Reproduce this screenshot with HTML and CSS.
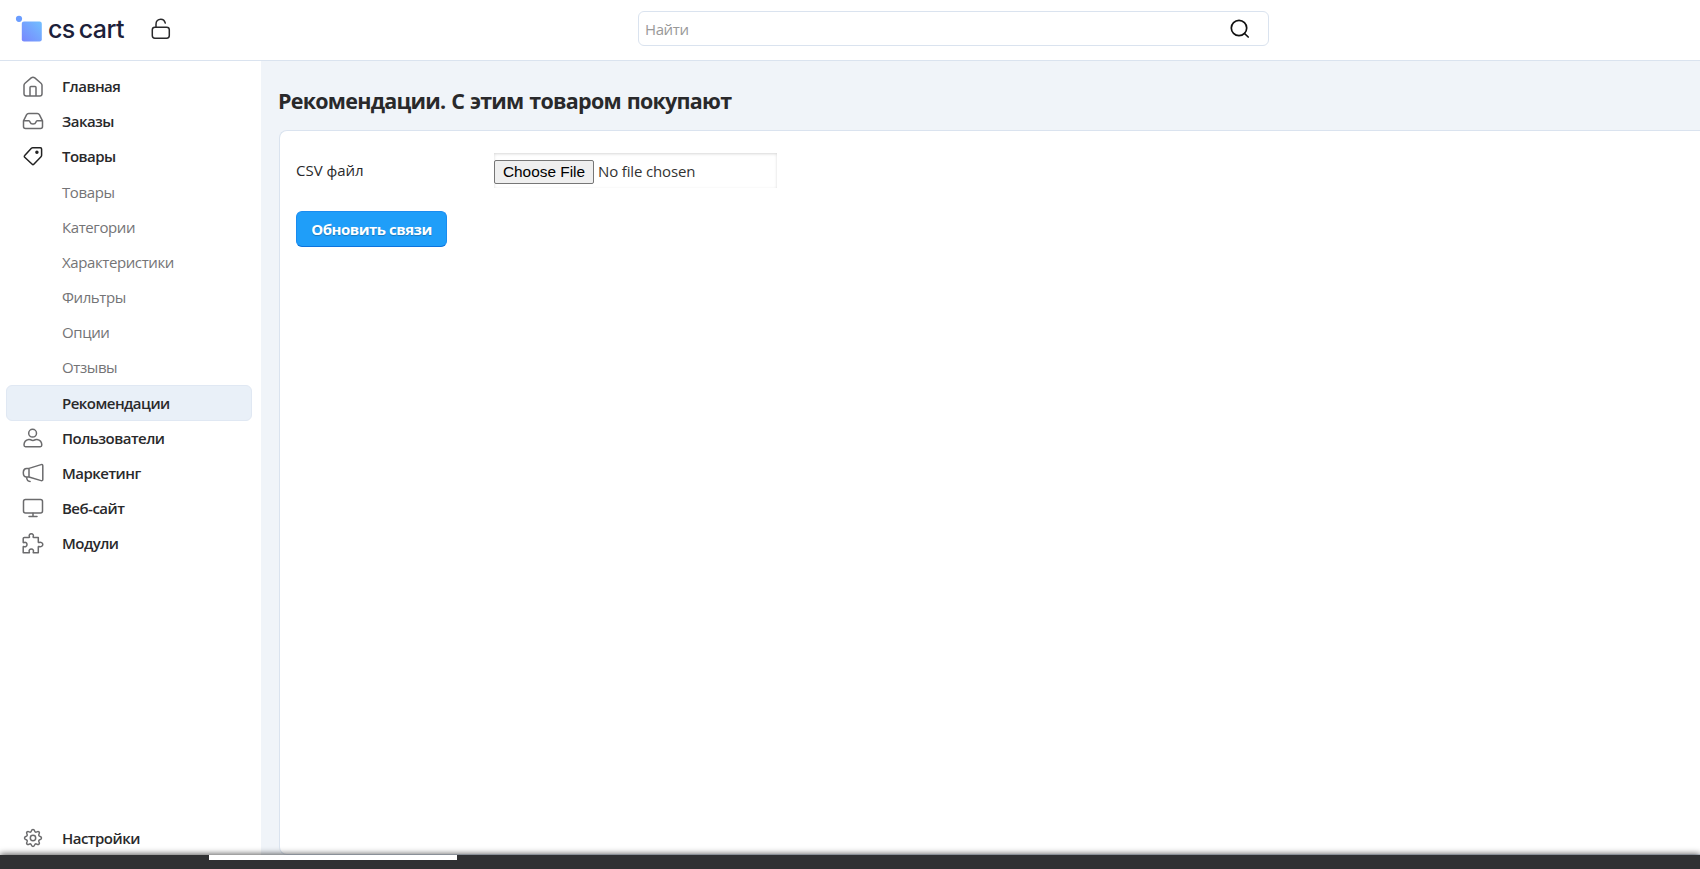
FILE: index.html
```html
<!DOCTYPE html>
<html lang="ru">
<head>
<meta charset="utf-8">
<title>Рекомендации. С этим товаром покупают</title>
<link rel="stylesheet" href="styles.css">
</head>
<body>
<header class="header">
  <div class="brand">
    <svg class="logo-mark" width="28" height="30" viewBox="0 0 28 30">
      <defs><linearGradient id="lg" x1="0" y1="1" x2="1" y2="0"><stop offset="0" stop-color="#7886fd"/><stop offset="1" stop-color="#72c0ff"/></linearGradient></defs>
      <circle cx="4" cy="3.8" r="3.1" fill="#6b9dff"/>
      <rect x="6.8" y="6.5" width="20" height="20" rx="2.2" fill="url(#lg)"/>
    </svg>
    <span class="logo-text">cs cart</span>
    <svg class="lock" width="20" height="22" viewBox="0 0 20 22" fill="none" stroke="#29292b" stroke-width="1.5" stroke-linecap="round"><rect x="1.300" y="9.200" width="17" height="11" rx="2.600"/><path d="M5 9V6.200C5 3.200 7 1.200 9.800 1.200c2.200 0 3.800 1.300 4.500 3.900"/></svg>
  </div>
  <div class="search">
    <span class="search-hint">Найти</span>
    <svg width="20" height="20" viewBox="0 0 20 20" fill="none" stroke="#111" stroke-width="1.700" stroke-linecap="round"><circle cx="9" cy="9" r="7.700"/><path d="M14.500 14.500l3.700 3.500"/></svg>
  </div>
</header>
<div class="layout">
  <nav class="sidebar">
    <a class="item"><svg class="icon" viewBox="0 0 22 22"><path d="M2 9.300C2 8.300 2.300 7.800 3 7.200L9.200 1.900c1.100-.9 2.500-.9 3.600 0L19 7.200c.7.600 1 1.100 1 2.100v8.400c0 1.500-.9 2.300-2.300 2.300H4.300C2.900 20 2 19.200 2 17.700zM8 20v-8.500c0-.7.300-1 .9-1h4.200c.6 0 .9.300.9 1V20"/></svg><span>Главная</span></a>
    <a class="item"><svg class="icon" viewBox="0 0.700 22 22"><path d="M1.500 10.500 4.500 4.600C5 3.600 5.600 3.200 6.700 3.200h8.600c1.100 0 1.700.4 2.200 1.400l3 5.900v5.800c0 1.300-.8 2-2 2h-15c-1.200 0-2-.7-2-2zH6.800c.9 0 1 .5 1.300 1.400.4 1.300 1 1.900 2.900 1.900s2.500-.6 2.900-1.900c.3-.9.400-1.400 1.300-1.400h5.300"/></svg><span>Заказы</span></a>
    <a class="item"><svg class="icon icon-dark" viewBox="0 0.700 22 22"><path d="M10.700 2.400h7.700c.8 0 1.200.400 1.200 1.200v6.400c0 .6-.2 1-.6 1.400l-7.200 7.500c-.5.500-1.100.5-1.600 0L2.700 11.900c-.5-.5-.5-1.100 0-1.600l6.700-7.300c.4-.4.700-.6 1.300-.6z"/><circle cx="14.900" cy="7" r="1" fill="#222"/></svg><span>Товары</span></a>
    <div class="submenu">
      <a class="item sub">Товары</a>
      <a class="item sub">Категории</a>
      <a class="item sub">Характеристики</a>
      <a class="item sub">Фильтры</a>
      <a class="item sub">Опции</a>
      <a class="item sub">Отзывы</a>
      <a class="item sub current">Рекомендации</a>
    </div>
    <a class="item"><svg class="icon" viewBox="0 0 22 22"><circle cx="10.600" cy="5.200" r="3.900"/><path d="M6.800 11.400C3.500 11.900 2 14.500 2 17.100c0 1.100.5 1.700 1.500 1.700h14.800c1 0 1.500-.6 1.500-1.700 0-2.600-1.500-5.200-4.800-5.700-1.300-.2-2.200 1-4.100 1s-2.800-1.200-4.100-1z"/></svg><span>Пользователи</span></a>
    <a class="item"><svg class="icon" viewBox="0 0 22 22"><path d="M7 5.400 19.100 1.600c1-.3 1.700.2 1.700 1.200v13.600c0 1-.7 1.500-1.700 1.200L7 14zM7 5.400H4.700C2.500 5.400 1.300 7.500 1.300 9.700S2.500 14 4.700 14H7M4.600 14.200c.2 2.600 1.300 4.200 3.500 4.200"/></svg><span>Маркетинг</span></a>
    <a class="item"><svg class="icon" viewBox="0 0 22 22"><rect x="1.500" y="1.500" width="19" height="13.500" rx="2"/><path d="M11 15.200v3M7 18.500h8"/></svg><span>Веб-сайт</span></a>
    <a class="item"><svg class="icon" viewBox="0 0 22 22"><path d="M2.400 4.400H7c.5 0 .6-.3.400-.8C6.700 2 7.700.8 9.300.8s2.600 1.200 1.900 2.800c-.2.500-.1.800.4.800h4.700v4.700c0 .5.300.6.800.4 1.600-.7 3.700.3 3.700 2s-2.100 2.700-3.700 2c-.5-.2-.8-.1-.8.400v5.900h-4.600c-.5 0-.6-.3-.4-.8.700-1.600-.4-3-2-3s-2.700 1.400-2 3c.2.500.1.800-.4.800H1.200V14c0-.5.300-.6.800-.4 1.600.7 3-.4 3-2s-1.400-2.700-3-2c-.5.200-.8.100-.8-.4V5.600c0-.8.400-1.200 1.200-1.200z"/></svg><span>Модули</span></a>
    <a class="item settings"><svg class="icon" viewBox="0 0.500 22 22"><circle cx="11" cy="10.500" r="2.700"/><path d="M11 2c1.200 0 1.400.5 1.700 1.600.3 1 1.100 1.300 2 .8 1-.6 1.600-.7 2.300 0s.6 1.300 0 2.300c-.5.900-.2 1.700.8 2 1.100.3 1.700.6 1.700 1.800s-.6 1.500-1.700 1.800c-1 .3-1.300 1.100-.8 2 .6 1 .7 1.600 0 2.300s-1.300.6-2.300 0c-.9-.5-1.700-.2-2 .8-.3 1.100-.5 1.600-1.700 1.600s-1.400-.5-1.700-1.600c-.3-1-1.100-1.300-2-.8-1 .6-1.600.7-2.300 0s-.6-1.300 0-2.300c.5-.9.200-1.700-.8-2-1.100-.3-1.700-.6-1.700-1.800s.6-1.500 1.700-1.800c1-.3 1.300-1.100.8-2-.6-1-.7-1.600 0-2.300s1.300-.6 2.300 0c.9.500 1.700.2 2-.8C9.600 2.500 9.800 2 11 2z"/></svg><span>Настройки</span></a>
  </nav>
  <main class="main">
    <h1 class="title">Рекомендации. С этим товаром покупают</h1>
    <section class="card">
      <div class="field">
        <label class="label" for="csv">CSV файл</label>
        <input class="file" id="csv" type="file">
      </div>
      <button class="submit">Обновить связи</button>
    </section>
  </main>
</div>
<footer class="bottom"><div class="bottom-bar"></div></footer>
</body>
</html>
```
FILE: styles.css
```css
* { box-sizing: border-box; }
body {
  margin: 0;
  height: 869px;
  overflow: hidden;
  display: flex;
  flex-direction: column;
  font-family: "Open Sans", "Noto Sans", sans-serif;
  font-size: 15px;
  color: #29292b;
  background: #fff;
}
.header {
  height: 61px;
  flex: none;
  display: flex;
  border-bottom: 1px solid #dae3ef;
}
.brand {
  width: 638px;
  display: flex;
  align-items: flex-start;
  padding: 15px 0 0 15px;
}
.logo-mark { flex: none; }
.logo-text {
  width: 76px;
  margin: -2px 27px 0 5px;
  font: 500 25px/32px Inter, sans-serif;
  letter-spacing: -0.6px;
  word-spacing: -2px;
  color: #1c2039;
  white-space: nowrap;
}
.lock { margin-top: 3px; }
.search {
  width: 631px;
  height: 35px;
  margin-top: 11px;
  padding: 0 18px 0 6px;
  border: 1px solid #dae3ef;
  border-radius: 6px;
  display: flex;
  align-items: center;
  justify-content: space-between;
}
.search-hint {
  color: #999;
  letter-spacing: -0.4px;
}
.layout {
  flex: 1;
  min-height: 0;
  display: flex;
}
.sidebar {
  width: 261px;
  flex: none;
  padding: 8px 9px 0 6px;
  display: flex;
  flex-direction: column;
}
.item {
  height: 35px;
  flex: none;
  display: flex;
  align-items: center;
  gap: 18px;
  padding-left: 16px;
  font-weight: 600;
  letter-spacing: -0.52px;
  line-height: 35px;
}
.icon {
  width: 22px;
  height: 22px;
  fill: none;
  stroke: #6b6b6d;
  stroke-width: 1.5;
  stroke-linecap: round;
  stroke-linejoin: round;
}
.icon-dark { stroke: #222; }
.submenu { margin-top: 1px; }
.sub {
  padding-left: 56px;
  font-weight: 400;
  letter-spacing: -0.4px;
  color: #747476;
}
.current {
  height: 36px;
  padding-left: 55px;
  border: 1px solid #e0e8f3;
  border-radius: 6px;
  background: #e9f0f8;
  font-weight: 600;
  letter-spacing: -0.52px;
  color: #29292b;
}
.settings { margin-top: auto; margin-bottom: -1px; }
.main {
  flex: 1;
  display: flex;
  flex-direction: column;
  padding-left: 18px;
  background: #f0f4f9;
}
.title {
  height: 69px;
  margin: 0 0 0 -1px;
  font-size: 21.5px;
  font-weight: 700;
  letter-spacing: -0.75px;
  word-spacing: 1px;
  line-height: 79px;
  white-space: nowrap;
}
.card {
  flex: 1;
  padding: 22px 16px;
  border: 1px solid #dae3ef;
  border-right: 0;
  border-radius: 8px 0 0 8px;
  background: #fff;
}
.field { display: flex; }
.label {
  width: 198px;
  line-height: 35px;
}
.file {
  width: 283px;
  height: 35px;
  padding: 6px 0 0;
  font: 15px/24px "Open Sans", sans-serif;
  letter-spacing: -0.15px;
  color: #333;
  box-shadow: inset 0 1px 3px rgba(0, 0, 0, .16);
}
.file::file-selector-button {
  width: 100px;
  height: 24px;
  margin: 0 4px 0 0;
  padding: 0;
  border: 1px solid #767676;
  border-radius: 2px;
  background: #efefef;
  color: #000;
  font: 15.4px/20px "Liberation Sans", sans-serif;
  letter-spacing: 0;
}
.submit {
  display: block;
  width: 151px;
  height: 36px;
  margin-top: 23px;
  padding: 0;
  border: 1px solid #1a8cf0;
  border-bottom-color: #0d73dc;
  border-radius: 6px;
  background: #1f9ef9;
  color: #fff;
  font: 700 15px/34px "Open Sans", sans-serif;
  letter-spacing: -0.48px;
  text-shadow: 0 1px 1px rgba(0, 0, 0, .25);
}
.bottom {
  flex: none;
  height: 14px;
  background: #303133;
  box-shadow: 0 -1px 6px rgba(0, 0, 0, .65);
  position: relative;
}
.bottom-bar {
  width: 248px;
  height: 5px;
  margin-left: 209px;
  background: #fff;
}
```
